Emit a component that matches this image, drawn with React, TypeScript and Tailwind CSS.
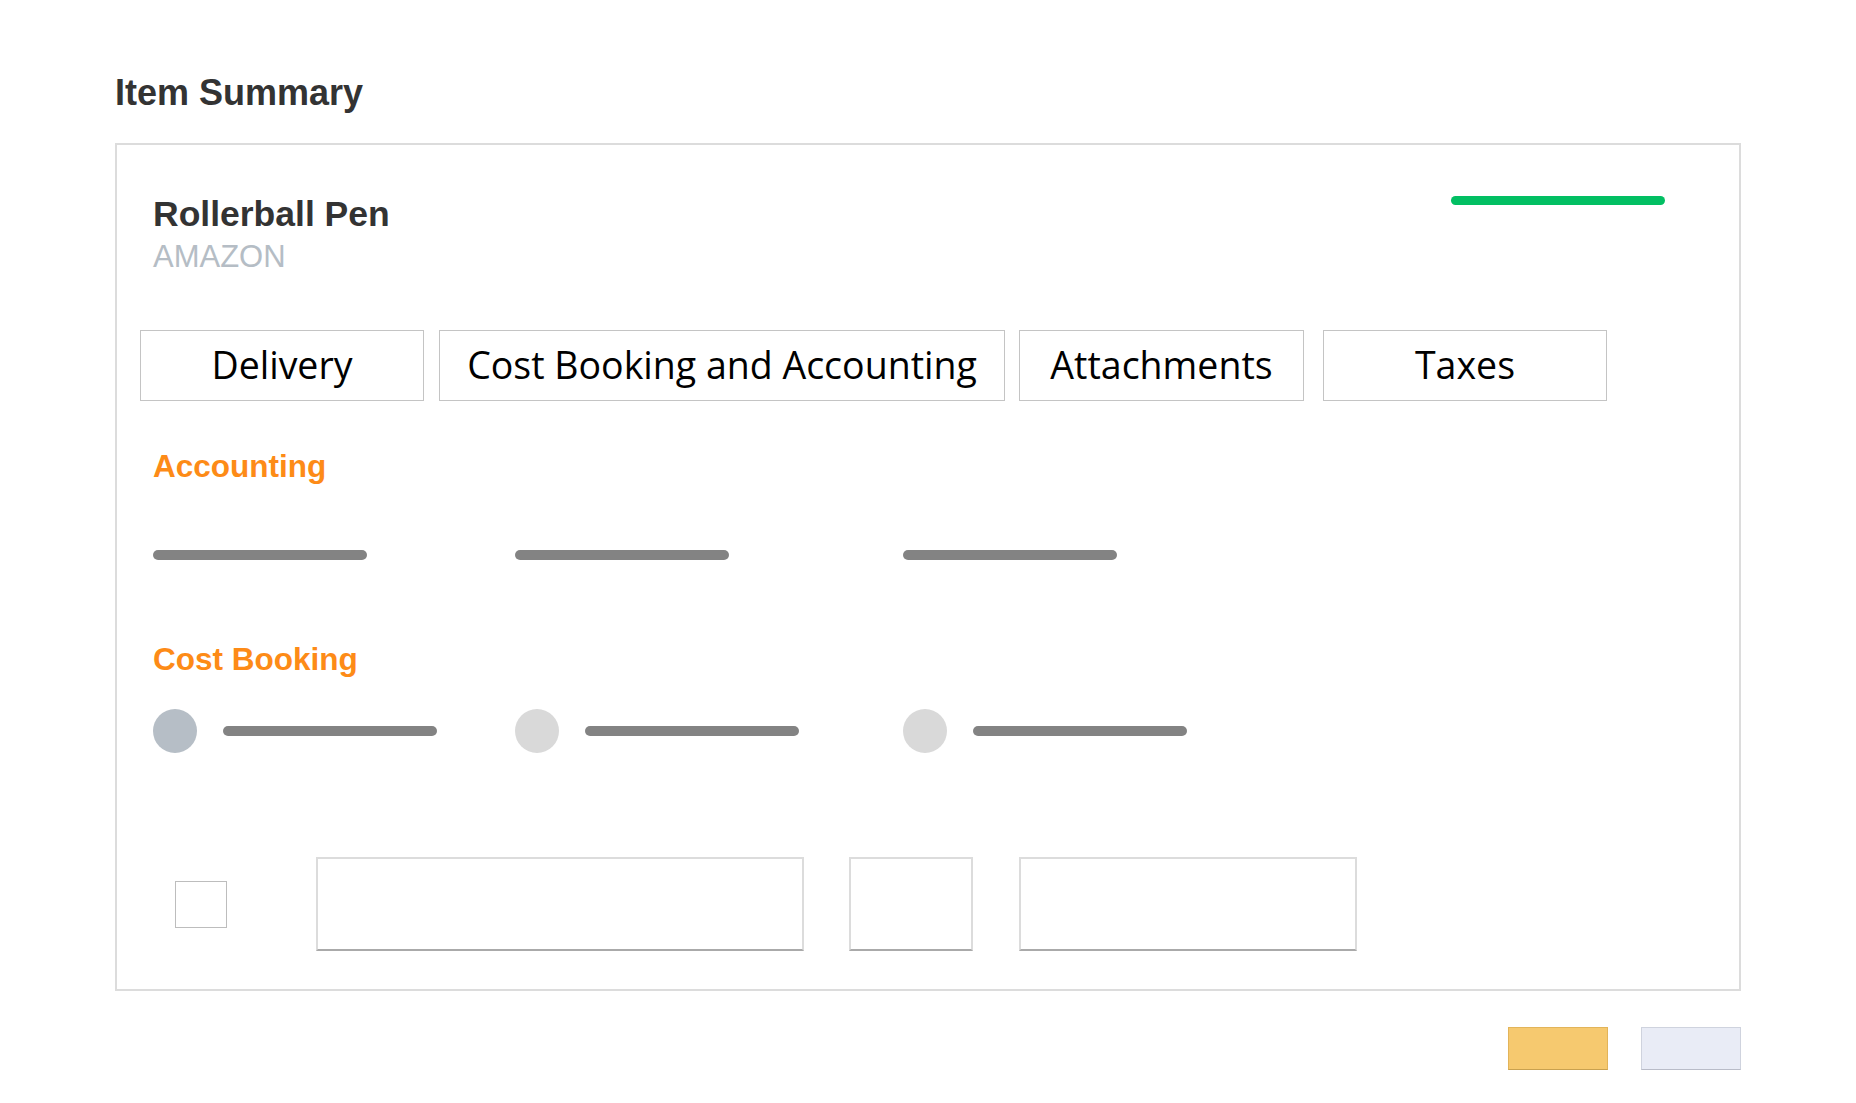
import React from 'react';

const tabs = [
  { label: 'Delivery', w: 'w-[284px]', mr: 'mr-[15px]' },
  { label: 'Cost Booking and Accounting', w: 'w-[566px]', mr: 'mr-[14px]' },
  { label: 'Attachments', w: 'w-[285px]', mr: 'mr-[19px]' },
  { label: 'Taxes', w: 'w-[284px]', mr: '' },
];

function Bar() {
  return <div className="h-[10px] w-[214px] rounded-full bg-[#838383]" />;
}

function Dot({ active }: { active?: boolean }) {
  return (
    <div
      className={
        active
          ? 'h-[44px] w-[44px] rounded-full bg-[#b6bec6]'
          : 'h-[44px] w-[44px] rounded-full bg-[#d9d9d9]'
      }
    />
  );
}

function Field({ w }: { w: string }) {
  return (
    <div
      className={`${w} h-[94px] border-2 border-[#dcdcdc] border-b-[#aaaaaa] bg-white`}
    />
  );
}

export default function App() {
  return (
    <div
      className="min-h-screen bg-white pl-[115px] pt-[73px]"
      style={{ fontFamily: '"Liberation Sans", Arial, sans-serif' }}
    >
      {/* Title */}
      <h1 className="text-[36px] leading-[40px] font-bold text-[#333333]">Item Summary</h1>

      {/* Card */}
      <div className="mt-[30px] w-[1626px] border-2 border-[#dcdcdc] px-[23px] pt-[49px] pb-[38px]">
        {/* Header */}
        <div className="flex items-start justify-between">
          <div className="ml-[13px]">
            <div className="text-[35.5px] leading-[40px] font-bold text-[#333333]">Rollerball Pen</div>
            <div className="mt-[5px] text-[31px] leading-[36px] text-[#b5bdc5]">AMAZON</div>
          </div>
          <div className="mt-[2px] mr-[51px] h-[9px] w-[214px] rounded-full bg-[#02bf63]" />
        </div>

        {/* Tabs */}
        <div className="mt-[55px] flex">
          {tabs.map((t) => (
            <div
              key={t.label}
              className={`${t.w} ${t.mr} flex h-[71px] items-center justify-center border-[1.5px] border-[#c4c4c4] text-[37.5px] text-black`}
              style={{ fontFamily: '"Open Sans", sans-serif' }}
            >
              {t.label}
            </div>
          ))}
        </div>

        {/* Accounting */}
        <div className="ml-[13px]">
          <div className="mt-[47px] text-[31.5px] leading-[36px] font-bold text-[#fd8b17]">Accounting</div>
          <div className="mt-[66px] flex">
            <div className="w-[362px]">
              <Bar />
            </div>
            <div className="w-[388px]">
              <Bar />
            </div>
            <Bar />
          </div>

          {/* Cost Booking */}
          <div className="mt-[81px] text-[31.5px] leading-[36px] font-bold text-[#fd8b17]">Cost Booking</div>
          <div className="mt-[32px] flex items-center">
            <div className="flex w-[362px] items-center gap-[26px]">
              <Dot active />
              <Bar />
            </div>
            <div className="flex w-[388px] items-center gap-[26px]">
              <Dot />
              <Bar />
            </div>
            <div className="flex items-center gap-[26px]">
              <Dot />
              <Bar />
            </div>
          </div>
        </div>

        {/* Inputs */}
        <div className="mt-[104px] flex items-center">
          <div className="ml-[35px] mr-[89px] h-[47px] w-[52px] border border-[#bdbdbd] bg-white" />
          <Field w="w-[488px]" />
          <div className="w-[45px]" />
          <Field w="w-[124px]" />
          <div className="w-[46px]" />
          <Field w="w-[338px]" />
        </div>
      </div>

      {/* Actions */}
      <div className="mt-[36px] flex w-[1626px] justify-end gap-[33px]">
        <div className="h-[43px] w-[100px] border border-[#e2b45a] border-b-[#c9a14f] bg-[#f6c96f]" />
        <div className="h-[43px] w-[100px] border border-[#cfd3de] border-b-[#b9bcc8] bg-[#e9ecf6]" />
      </div>
    </div>
  );
}
